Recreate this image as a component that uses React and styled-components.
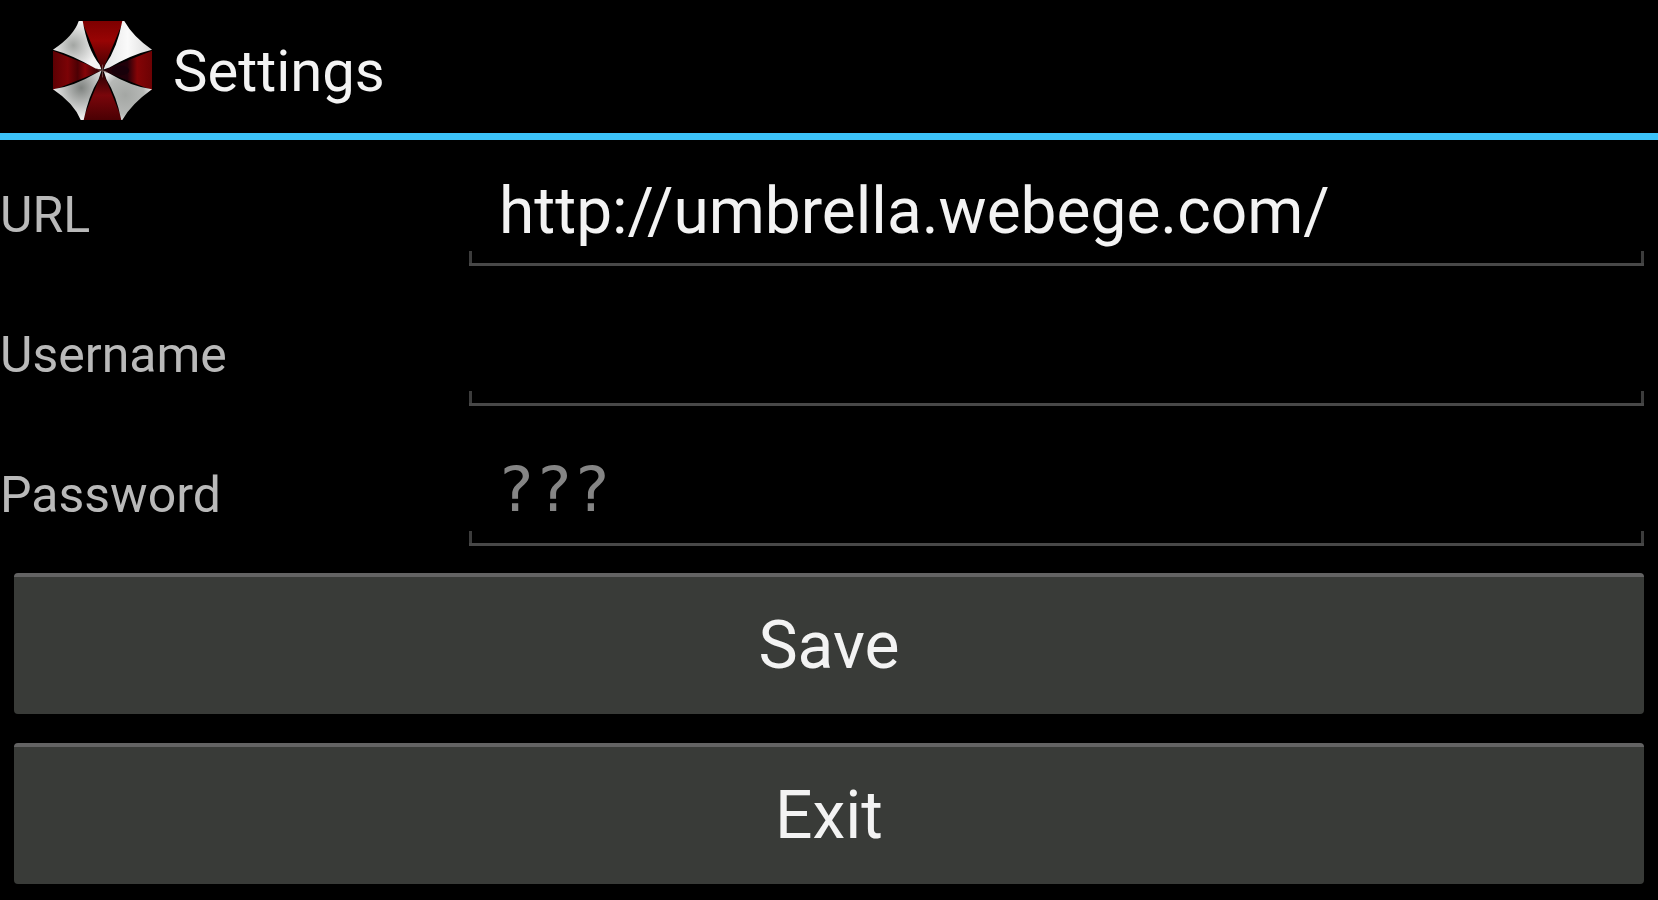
import { useState } from "react"
import styled, { createGlobalStyle } from "styled-components"

const GlobalStyle = createGlobalStyle`
    body {
        margin: 0;
        background-color: #000;
        font-family: Roboto, sans-serif;
    }
`

const Header = styled.header`
    display: flex;
    align-items: center;
    gap: 20px;
    height: 133px;
    padding: 0 52px;
    border-bottom: 7px solid #3cc2f8;
    h1 {
        margin: 0;
        padding-top: 8px;
        color: #f3f3f3;
        font-size: 58px;
        font-weight: 400;
        line-height: 68px;
    }
`

const Logo = styled.svg`
    width: 101px;
    height: 101px;
    margin-top: 8px;
`

const Row = styled.div`
    display: grid;
    grid-template-columns: 455px 1fr;
    align-items: center;
    height: 140px;
`

const Label = styled.label`
    padding-top: 10px;
    color: #b9b9b9;
    font-size: 50px;
    line-height: 60px;
`

// bottom line with a small tick at each end
const Field = styled.input`
    box-sizing: border-box;
    width: 100%;
    height: 112px;
    padding: ${(props) => (props.$mono ? "0 28px 2px" : "2px 30px 0")};
    border: none;
    outline: none;
    color: #f3f3f3;
    font-family: ${(props) => (props.$mono ? '"DejaVu Sans Mono", monospace' : "inherit")};
    font-size: ${(props) => (props.$mono ? "63px" : "64px")};
    background:
        linear-gradient(#484848, #484848) left bottom / 100% 3px no-repeat,
        linear-gradient(#3c3c3c, #3c3c3c) left bottom / 3px 15px no-repeat,
        linear-gradient(#3c3c3c, #3c3c3c) right bottom / 3px 15px no-repeat;
    &::placeholder {
        color: #858585;
        opacity: 1;
    }
`

const FieldBox = styled.div`
    padding: 0 14px;
`

const Actions = styled.div`
    display: flex;
    flex-direction: column;
    gap: 29px;
    padding: 13px 14px;
`

const Button = styled.button`
    height: 141px;
    padding: 0;
    border: none;
    border-top: 4px solid #636363;
    border-radius: 4px;
    background-color: #393b38;
    color: #f3f3f3;
    font-family: inherit;
    font-size: 66px;
    line-height: 76px;
`

const UmbrellaLogo = () => {
    return (
        <Logo viewBox="0 0 102 102" aria-hidden="true">
            <defs>
                <linearGradient id="redTop" x1="0" y1="0" x2="0" y2="1">
                    <stop offset="0" stopColor="#7d0000" />
                    <stop offset="0.4" stopColor="#980404" />
                    <stop offset="1" stopColor="#3c0003" />
                </linearGradient>
                <linearGradient id="redLeft">
                    <stop offset="0" stopColor="#5c0003" />
                    <stop offset="0.3" stopColor="#7c0306" />
                    <stop offset="0.5" stopColor="#4c0004" />
                    <stop offset="0.65" stopColor="#860408" />
                    <stop offset="1" stopColor="#1c0003" />
                </linearGradient>
                <linearGradient id="redRight">
                    <stop offset="0" stopColor="#240008" />
                    <stop offset="0.5" stopColor="#20000a" />
                    <stop offset="0.7" stopColor="#850406" />
                    <stop offset="1" stopColor="#6c0204" />
                </linearGradient>
                <linearGradient id="redBottom" x1="0" y1="0" x2="0" y2="1">
                    <stop offset="0" stopColor="#200002" />
                    <stop offset="0.5" stopColor="#7a060b" />
                    <stop offset="1" stopColor="#4a0003" />
                </linearGradient>
                <radialGradient id="whiteTopLeft" cx="0.42" cy="0.5" r="0.5">
                    <stop offset="0" stopColor="#a3a6a3" />
                    <stop offset="1" stopColor="#f4f4f4" />
                </radialGradient>
                <linearGradient id="whiteTopRight">
                    <stop offset="0" stopColor="#e4e4e4" />
                    <stop offset="0.5" stopColor="#fafafa" />
                    <stop offset="1" stopColor="#dadada" />
                </linearGradient>
                <radialGradient id="whiteBottomLeft" cx="0.58" cy="0.35" r="0.6">
                    <stop offset="0" stopColor="#7f8380" />
                    <stop offset="1" stopColor="#eeeeee" />
                </radialGradient>
                <radialGradient id="whiteBottomRight" cx="0.45" cy="0.5" r="0.55">
                    <stop offset="0" stopColor="#a4a7a4" />
                    <stop offset="0.7" stopColor="#b6b8b6" />
                    <stop offset="1" stopColor="#e8e8e8" />
                </radialGradient>
            </defs>
            <path d="M30 1 H72 L51 51 Z" fill="url(#redTop)" />
            <path d="M1 31 V71 L51 51 Z" fill="url(#redLeft)" />
            <path d="M101 31 V71 L51 51 Z" fill="url(#redRight)" />
            <path d="M31 101 H71 L51 51 Z" fill="url(#redBottom)" />
            <path d="M27 1 Q22 16 1 30 Q20 35 44 49 L50 50 L48 45 Q36 30 31 1 Z" fill="url(#whiteTopLeft)" />
            <path d="M73 1 Q82 17 101 30 Q80 35 58 48 L52 50 L54 45 Q66 28 71 1 Z" fill="url(#whiteTopRight)" />
            <path d="M29 101 Q22 84 1 70 Q22 67 44 54 L50 51 L47 60 Q37 76 32 101 Z" fill="url(#whiteBottomLeft)" />
            <path d="M71 101 Q80 85 101 70 Q80 67 58 54 L52 51 L55 60 Q65 76 70 101 Z" fill="url(#whiteBottomRight)" />
            <path d="M46 50 L56 53 M51 45 V58" stroke="#8a6664" strokeWidth="1" opacity="0.7" />
            <ellipse cx="69" cy="51" rx="9" ry="5" fill="#16000a" opacity="0.8" />
        </Logo>
    )
}

const App = () => {
    const [url, setUrl] = useState("http://umbrella.webege.com/")
    const [username, setUsername] = useState("")
    const [password, setPassword] = useState("")

    return (
        <>
            <GlobalStyle />
            <Header>
                <UmbrellaLogo />
                <h1>Settings</h1>
            </Header>
            <form onSubmit={(e) => e.preventDefault()}>
                <Row>
                    <Label htmlFor="url">URL</Label>
                    <FieldBox>
                        <Field id="url" type="text" spellCheck={false} value={url} onChange={(e) => setUrl(e.target.value)} />
                    </FieldBox>
                </Row>
                <Row>
                    <Label htmlFor="username">Username</Label>
                    <FieldBox>
                        <Field id="username" type="text" value={username} onChange={(e) => setUsername(e.target.value)} />
                    </FieldBox>
                </Row>
                <Row>
                    <Label htmlFor="password">Password</Label>
                    <FieldBox>
                        <Field $mono id="password" type="password" placeholder="???" value={password} onChange={(e) => setPassword(e.target.value)} />
                    </FieldBox>
                </Row>
                <Actions>
                    <Button type="submit">Save</Button>
                    <Button type="button">Exit</Button>
                </Actions>
            </form>
        </>
    )
}

export default App
